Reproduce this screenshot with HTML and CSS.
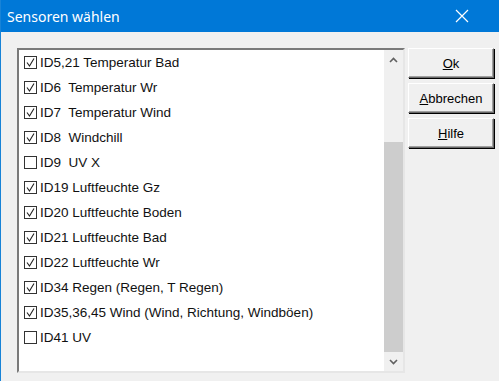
FILE: index.html
```html
<!DOCTYPE html>
<html lang="de">
<head>
    <meta charset="UTF-8">
    <title>Sensoren wählen</title>
    <link rel="stylesheet" href="styles.css">
</head>
<body>
    <div class="window">
        <div class="titlebar">
            <span class="title">Sensoren wählen</span>
            <svg class="close" width="14" height="14" viewBox="0 0 14 14">
                <path d="M1,1 L13,13 M13,1 L1,13" stroke="#fff" stroke-width="1.2" fill="none"/>
            </svg>
        </div>
        <div class="content">
            <div class="listbox">
                <ul class="items">
                    <li class="item checked"><span class="box"></span>ID5,21 Temperatur Bad</li>
                    <li class="item checked"><span class="box"></span>ID6&nbsp; Temperatur Wr</li>
                    <li class="item checked"><span class="box"></span>ID7&nbsp; Temperatur Wind</li>
                    <li class="item checked"><span class="box"></span>ID8&nbsp; Windchill</li>
                    <li class="item"><span class="box"></span>ID9&nbsp; UV X</li>
                    <li class="item checked"><span class="box"></span>ID19 Luftfeuchte Gz</li>
                    <li class="item checked"><span class="box"></span>ID20 Luftfeuchte Boden</li>
                    <li class="item checked"><span class="box"></span>ID21 Luftfeuchte Bad</li>
                    <li class="item checked"><span class="box"></span>ID22 Luftfeuchte Wr</li>
                    <li class="item checked"><span class="box"></span>ID34 Regen (Regen, T Regen)</li>
                    <li class="item checked"><span class="box"></span>ID35,36,45 Wind (Wind, Richtung, Windböen)</li>
                    <li class="item"><span class="box"></span>ID41 UV</li>
                </ul>
                <div class="scrollbar">
                    <div class="arrow">
                        <svg width="9" height="6" viewBox="0 0 9 6"><path d="M1,5 L4.5,1.5 L8,5" stroke="#606060" stroke-width="1.6" fill="none"/></svg>
                    </div>
                    <div class="track">
                        <div class="thumb"></div>
                    </div>
                    <div class="arrow">
                        <svg width="9" height="6" viewBox="0 0 9 6"><path d="M1,1 L4.5,4.5 L8,1" stroke="#606060" stroke-width="1.6" fill="none"/></svg>
                    </div>
                </div>
            </div>
            <div class="buttons">
                <button class="btn"><u>O</u>k</button>
                <button class="btn"><u>A</u>bbrechen</button>
                <button class="btn"><u>H</u>ilfe</button>
            </div>
        </div>
    </div>
</body>
</html>
```

FILE: styles.css
```css
body {
    margin: 0;
    background-color: #f0f0f0;
    font-family: 'Liberation Sans', Arial, sans-serif;
}
.window {
    width: 499px;
    height: 381px;
    box-sizing: border-box;
    border-left: 1px solid #1883d7;
    background-color: #f0f0f0;
    overflow: hidden;
}
.titlebar {
    height: 32px;
    background-color: #0078d7;
    display: flex;
    align-items: center;
    justify-content: space-between;
    padding: 0 30px 0 6px;
}
.title {
    color: #fff;
    font-family: 'Noto Sans', sans-serif;
    font-size: 14px;
}
.close {
    display: block;
}
.content {
    display: flex;
    padding: 16px 0 0 16px;
    gap: 3px;
}
.listbox {
    width: 388px;
    height: 325px;
    box-sizing: border-box;
    background-color: #fff;
    border-top: 2px solid #7a7a7a;
    border-left: 2px solid #7a7a7a;
    border-right: 2px solid #e6e6e6;
    border-bottom: 2px solid #e6e6e6;
    display: flex;
}
.items {
    list-style: none;
    margin: 0;
    padding: 0 0 0 5px;
    flex: 1;
}
.item {
    height: 25px;
    display: flex;
    align-items: center;
    font-size: 13.5px;
    color: #111;
    white-space: nowrap;
}
.box {
    width: 13px;
    height: 13px;
    box-sizing: border-box;
    border: 1px solid #333;
    margin-right: 3px;
    flex: none;
    background-color: #fff;
}
.item.checked .box {
    background: #fff url("data:image/svg+xml;utf8,<svg xmlns='http://www.w3.org/2000/svg' width='11' height='11' viewBox='0 0 11 11'><path d='M2,5.5 L4.5,9 L9,1.5' stroke='%23222' stroke-width='1.1' fill='none'/></svg>") no-repeat center;
}
.scrollbar {
    width: 19px;
    display: flex;
    flex-direction: column;
    background-color: #f0f0f0;
}
.arrow {
    height: 19px;
    display: flex;
    align-items: center;
    justify-content: center;
}
.track {
    flex: 1;
    display: flex;
    flex-direction: column;
    justify-content: flex-end;
}
.thumb {
    height: 210px;
    background-color: #cdcdcd;
}
.buttons {
    display: flex;
    flex-direction: column;
    gap: 5px;
}
.btn {
    width: 86px;
    height: 30px;
    font-family: 'Liberation Sans', Arial, sans-serif;
    font-size: 13px;
    color: #000;
    background-color: #f0f0f0;
    border-top: 1px solid #fff;
    border-left: 1px solid #fff;
    border-right: 1px solid #696969;
    border-bottom: 1px solid #696969;
    box-shadow: inset -1px -1px 0 #a0a0a0, 1px 1px 0 #000;
    padding: 0;
}
```
